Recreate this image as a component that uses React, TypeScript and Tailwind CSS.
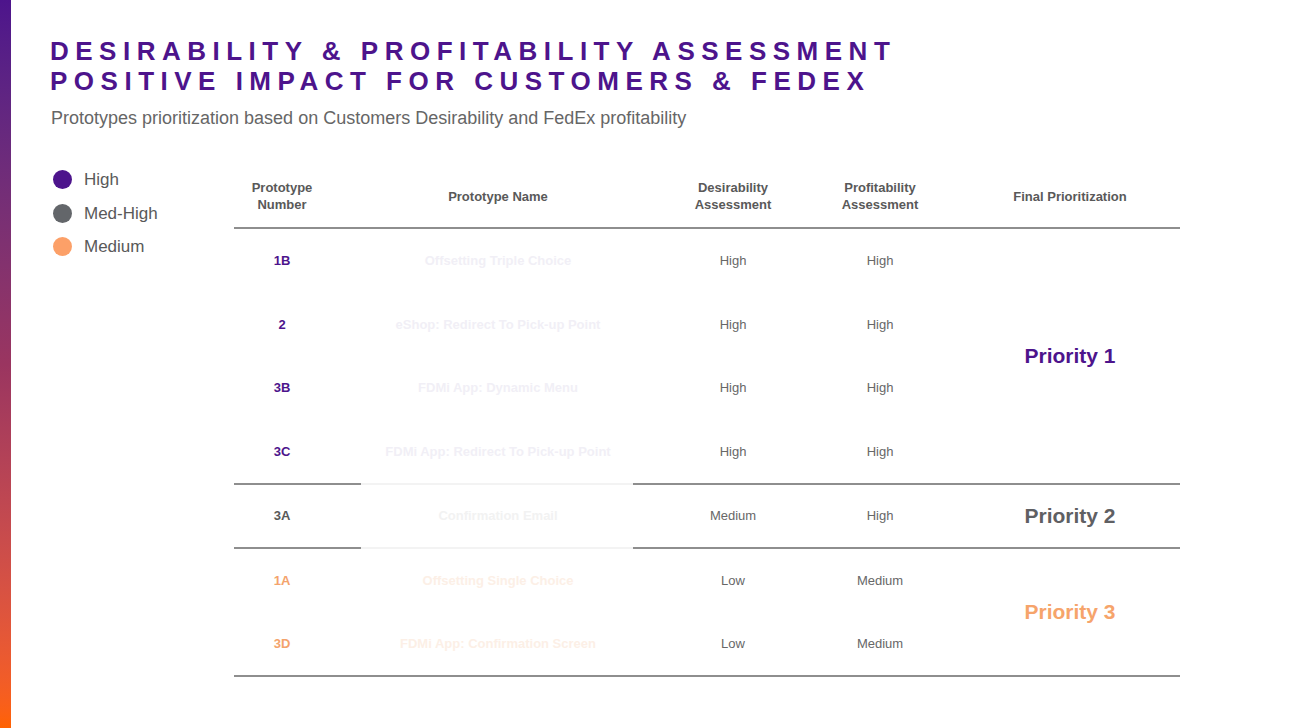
import React from "react";

type Row = { num: string; name: string; des: string; prof: string };
type Group = {
  label: string;
  height: string;
  numColor: string;
  nameColor: string;
  labelColor: string;
  rows: Row[];
};

const groups: Group[] = [
  {
    label: "Priority 1",
    height: "h-[254px]",
    numColor: "text-[#4d148c]",
    nameColor: "text-[#f1eff6]",
    labelColor: "text-[#4d148c]",
    rows: [
      { num: "1B", name: "Offsetting Triple Choice", des: "High", prof: "High" },
      { num: "2", name: "eShop: Redirect To Pick-up Point", des: "High", prof: "High" },
      { num: "3B", name: "FDMi App: Dynamic Menu", des: "High", prof: "High" },
      { num: "3C", name: "FDMi App: Redirect To Pick-up Point", des: "High", prof: "High" },
    ],
  },
  {
    label: "Priority 2",
    height: "h-[62px]",
    numColor: "text-[#595959]",
    nameColor: "text-[#f2f2f2]",
    labelColor: "text-[#5f6063]",
    rows: [{ num: "3A", name: "Confirmation Email", des: "Medium", prof: "High" }],
  },
  {
    label: "Priority 3",
    height: "h-[126px]",
    numColor: "text-[#f4a36c]",
    nameColor: "text-[#fcefe6]",
    labelColor: "text-[#f6a46b]",
    rows: [
      { num: "1A", name: "Offsetting Single Choice", des: "Low", prof: "Medium" },
      { num: "3D", name: "FDMi App: Confirmation Screen", des: "Low", prof: "Medium" },
    ],
  },
];

const legend = [
  { label: "High", color: "bg-[#4d148c]" },
  { label: "Med-High", color: "bg-[#63666a]" },
  { label: "Medium", color: "bg-[#fca068]" },
];

function SplitLine() {
  return (
    <div className="flex h-[2px]">
      <div className="w-[127px] bg-[#8e8e8e]" />
      <div className="w-[272px] bg-[#f3f3f3]" />
      <div className="flex-1 bg-[#8e8e8e]" />
    </div>
  );
}

export default function App() {
  return (
    <div className="flex w-[1313px] h-[728px] bg-white overflow-hidden font-['Liberation_Sans',Arial,sans-serif]">
      {/* side stripe */}
      <div className="w-[11px] h-full bg-gradient-to-b from-[#4d148c] via-[#9a3560] to-[#ff6200]" />

      <div className="flex-1 pl-[39px] pt-[36px]">
        {/* Title */}
        <h1 className="text-[26px] leading-[30px] font-bold tracking-[6.5px] text-[#4d148c]">
          DESIRABILITY &amp; PROFITABILITY ASSESSMENT
          <br />
          POSITIVE IMPACT FOR CUSTOMERS &amp; FEDEX
        </h1>
        <p className="mt-[11px] text-[18px] leading-[22px] text-[#666666] pl-[1px]">
          Prototypes prioritization based on Customers Desirability and FedEx profitability
        </p>

        <div className="flex mt-[36px]">
          {/* Legend */}
          <div className="w-[184px] -mt-[2px] pl-[3px]">
            {legend.map((l) => (
              <div key={l.label} className="flex items-center h-[33.5px] gap-[12px]">
                <span className={`w-[19px] h-[19px] rounded-full ${l.color}`} />
                <span className="text-[17px] text-[#595959]">{l.label}</span>
              </div>
            ))}
          </div>

          {/* Table */}
          <div className="w-[946px]">
            <div className="flex h-[62px] items-center text-[13px] leading-[17px] font-bold text-[#595959] text-center">
              <div className="w-[96px]">
                Prototype
                <br />
                Number
              </div>
              <div className="w-[336px]">Prototype Name</div>
              <div className="w-[134px]">
                Desirability
                <br />
                Assessment
              </div>
              <div className="w-[160px]">
                Profitability
                <br />
                Assessment
              </div>
              <div className="w-[220px]">Final Prioritization</div>
            </div>
            <div className="h-[2px] bg-[#8e8e8e]" />

            {groups.map((g, gi) => (
              <div key={g.label}>
                <div className={`flex ${g.height}`}>
                  <div className="w-[726px] flex flex-col">
                    {g.rows.map((r) => (
                      <div key={r.num} className="flex-1 flex items-center text-center text-[13px]">
                        <div className={`w-[96px] font-bold ${g.numColor}`}>{r.num}</div>
                        <div className={`w-[336px] font-bold ${g.nameColor}`}>{r.name}</div>
                        <div className="w-[134px] text-[#676767]">{r.des}</div>
                        <div className="w-[160px] text-[#676767]">{r.prof}</div>
                      </div>
                    ))}
                  </div>
                  <div className={`w-[220px] flex items-center justify-center text-[21px] font-bold ${g.labelColor}`}>
                    {g.label}
                  </div>
                </div>
                {gi < groups.length - 1 ? <SplitLine /> : <div className="h-[2px] bg-[#8e8e8e]" />}
              </div>
            ))}
          </div>
        </div>
      </div>
    </div>
  );
}
